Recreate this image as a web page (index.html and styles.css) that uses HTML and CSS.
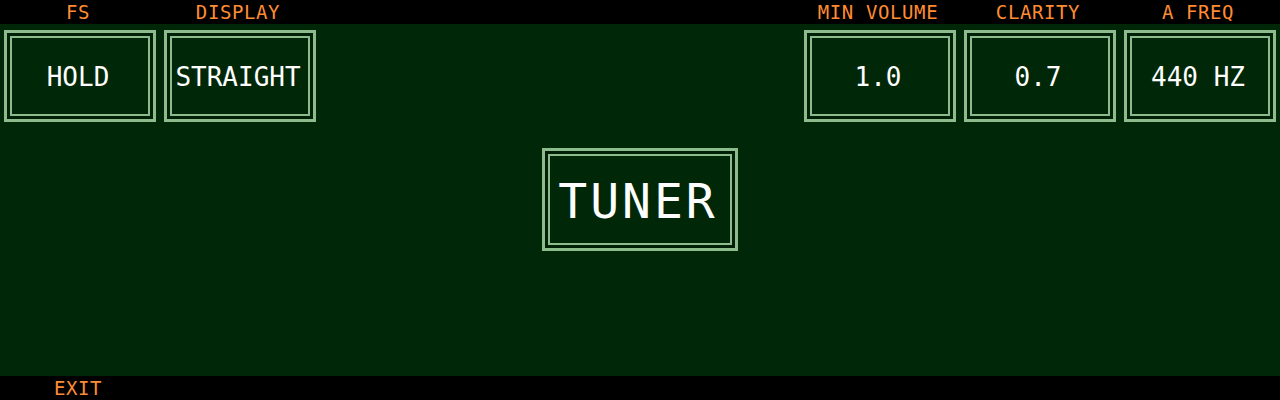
FILE: index.html
```html
<!DOCTYPE html>
<html>
<head>
<meta charset="utf-8">
<link rel="stylesheet" href="styles.css">
</head>
<body>
<div class="screen">
  <div class="topbar">
    <div class="label">FS</div>
    <div class="label">DISPLAY</div>
    <div></div>
    <div class="label">MIN VOLUME</div>
    <div class="label">CLARITY</div>
    <div class="label">A FREQ</div>
  </div>
  <div class="main">
    <div class="row">
      <div class="box"><div class="inner">HOLD</div></div>
      <div class="box"><div class="inner">STRAIGHT</div></div>
      <div></div>
      <div class="box"><div class="inner">1.0</div></div>
      <div class="box"><div class="inner">0.7</div></div>
      <div class="box"><div class="inner">440 HZ</div></div>
    </div>
    <div class="center">
      <div class="box big"><div class="inner">TUNER</div></div>
    </div>
  </div>
  <div class="bottombar">
    <div class="label">EXIT</div>
  </div>
</div>
</body>
</html>
```
FILE: styles.css
```css
html, body {
  margin: 0;
  padding: 0;
  background: #000;
}
.screen {
  width: 1280px;
  height: 400px;
  display: flex;
  flex-direction: column;
  font-family: "DejaVu Sans Mono", "Liberation Mono", monospace;
  overflow: hidden;
}
.topbar, .bottombar, .row {
  display: grid;
  grid-template-columns: 152px 152px 1fr 152px 152px 152px;
  column-gap: 8px;
  padding: 0 4px;
}
.topbar, .bottombar {
  height: 24px;
  background: #000;
  align-items: center;
}
.label {
  color: #ff8c33;
  font-size: 19px;
  letter-spacing: 0.6px;
  text-align: center;
  line-height: 24px;
  padding-right: 4px;
}
.main {
  flex: 1;
  background: #002808;
  display: flex;
  flex-direction: column;
  padding-top: 6px;
}
.box {
  border: 3px solid #8cbb8c;
  padding: 3px;
  background: #001f06;
  height: 92px;
  box-sizing: border-box;
}
.inner {
  border: 2px solid #8cbb8c;
  background: #002808;
  height: 100%;
  box-sizing: border-box;
  display: flex;
  align-items: center;
  justify-content: center;
  color: #fff;
  font-size: 26px;
  letter-spacing: 0;
  padding-top: 2px;
  padding-right: 4px;
}
.center {
  display: flex;
  justify-content: center;
  margin-top: 26px;
}
.big {
  width: 196px;
  height: 103px;
}
.big .inner {
  font-size: 48px;
  letter-spacing: 3px;
}
```
